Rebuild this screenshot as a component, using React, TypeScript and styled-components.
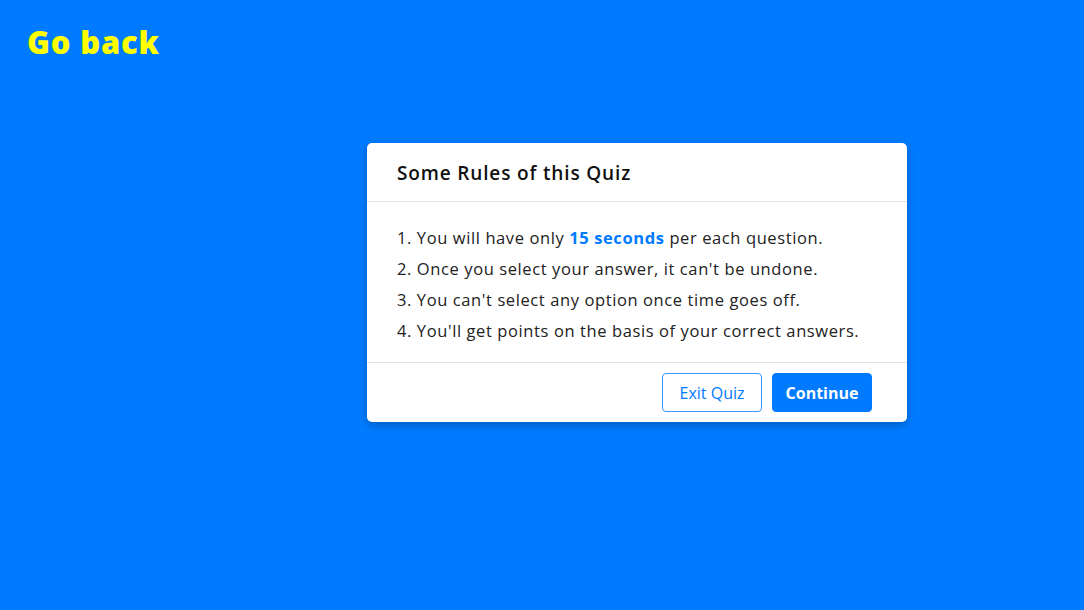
import styled, { createGlobalStyle } from 'styled-components';

const GlobalStyle = createGlobalStyle`
  html, body {
    margin: 0;
    padding: 0;
    background: #007bff;
    font-family: "Open Sans", "DejaVu Sans", sans-serif;
  }
`;

const Page = styled.div`
  min-height: 610px;
  box-sizing: border-box;
  padding: 22px 0 0 27px;
  display: flex;
  flex-direction: column;
`;

const GoBack = styled.a`
  align-self: flex-start;
  color: #ffff00;
  font-family: "Open Sans", sans-serif;
  font-size: 31px;
  font-weight: 800;
  letter-spacing: 0.8px;
  line-height: 40px;
  text-decoration: none;
  cursor: pointer;
`;

const Card = styled.div`
  margin: 81px 0 0 340px;
  width: 540px;
  background: #fff;
  border-radius: 5px;
  box-shadow: 0 3px 8px rgba(0, 0, 0, 0.25);
  color: #111;
`;

const Header = styled.div`
  height: 59px;
  box-sizing: border-box;
  padding: 2px 30px 0;
  display: flex;
  align-items: center;
  border-bottom: 1px solid #e2e2e2;
`;

const Title = styled.h3`
  margin: 0;
  font-size: 19px;
  font-weight: 600;
  letter-spacing: 0.85px;
  color: #111;
`;

const Body = styled.ol`
  list-style: none;
  margin: 0;
  padding: 20px 30px 16px;
  border-bottom: 1px solid #e2e2e2;
`;

const Rule = styled.li`
  font-size: 16.5px;
  letter-spacing: 0.6px;
  line-height: 31px;
  color: #222;
  white-space: nowrap;
`;

const Highlight = styled.span`
  color: #007bff;
  font-weight: 700;
`;

const Footer = styled.div`
  height: 59px;
  box-sizing: border-box;
  padding: 0 35px 0 0;
  display: flex;
  align-items: center;
  justify-content: flex-end;
  gap: 10px;
`;

const Button = styled.button<{ $primary?: boolean }>`
  width: 100px;
  height: 39px;
  border-radius: 4px;
  font-family: inherit;
  font-size: 16px;
  font-weight: ${(p) => (p.$primary ? 700 : 500)};
  cursor: pointer;
  border: 1px solid ${(p) => (p.$primary ? '#007bff' : '#3a93ff')};
  background: ${(p) => (p.$primary ? '#007bff' : '#fff')};
  color: ${(p) => (p.$primary ? '#fff' : '#007bff')};
`;

const rules = [
  <>
    1. You will have only <Highlight>15 seconds</Highlight> per each question.
  </>,
  <>2. Once you select your answer, it can't be undone.</>,
  <>3. You can't select any option once time goes off.</>,
  <>4. You'll get points on the basis of your correct answers.</>,
];

export default function App() {
  return (
    <>
      <GlobalStyle />
      <Page>
        <GoBack>Go back</GoBack>
        <Card>
          <Header>
            <Title>Some Rules of this Quiz</Title>
          </Header>
          <Body>
            {rules.map((r, i) => (
              <Rule key={i}>{r}</Rule>
            ))}
          </Body>
          <Footer>
            <Button>Exit Quiz</Button>
            <Button $primary>Continue</Button>
          </Footer>
        </Card>
      </Page>
    </>
  );
}
